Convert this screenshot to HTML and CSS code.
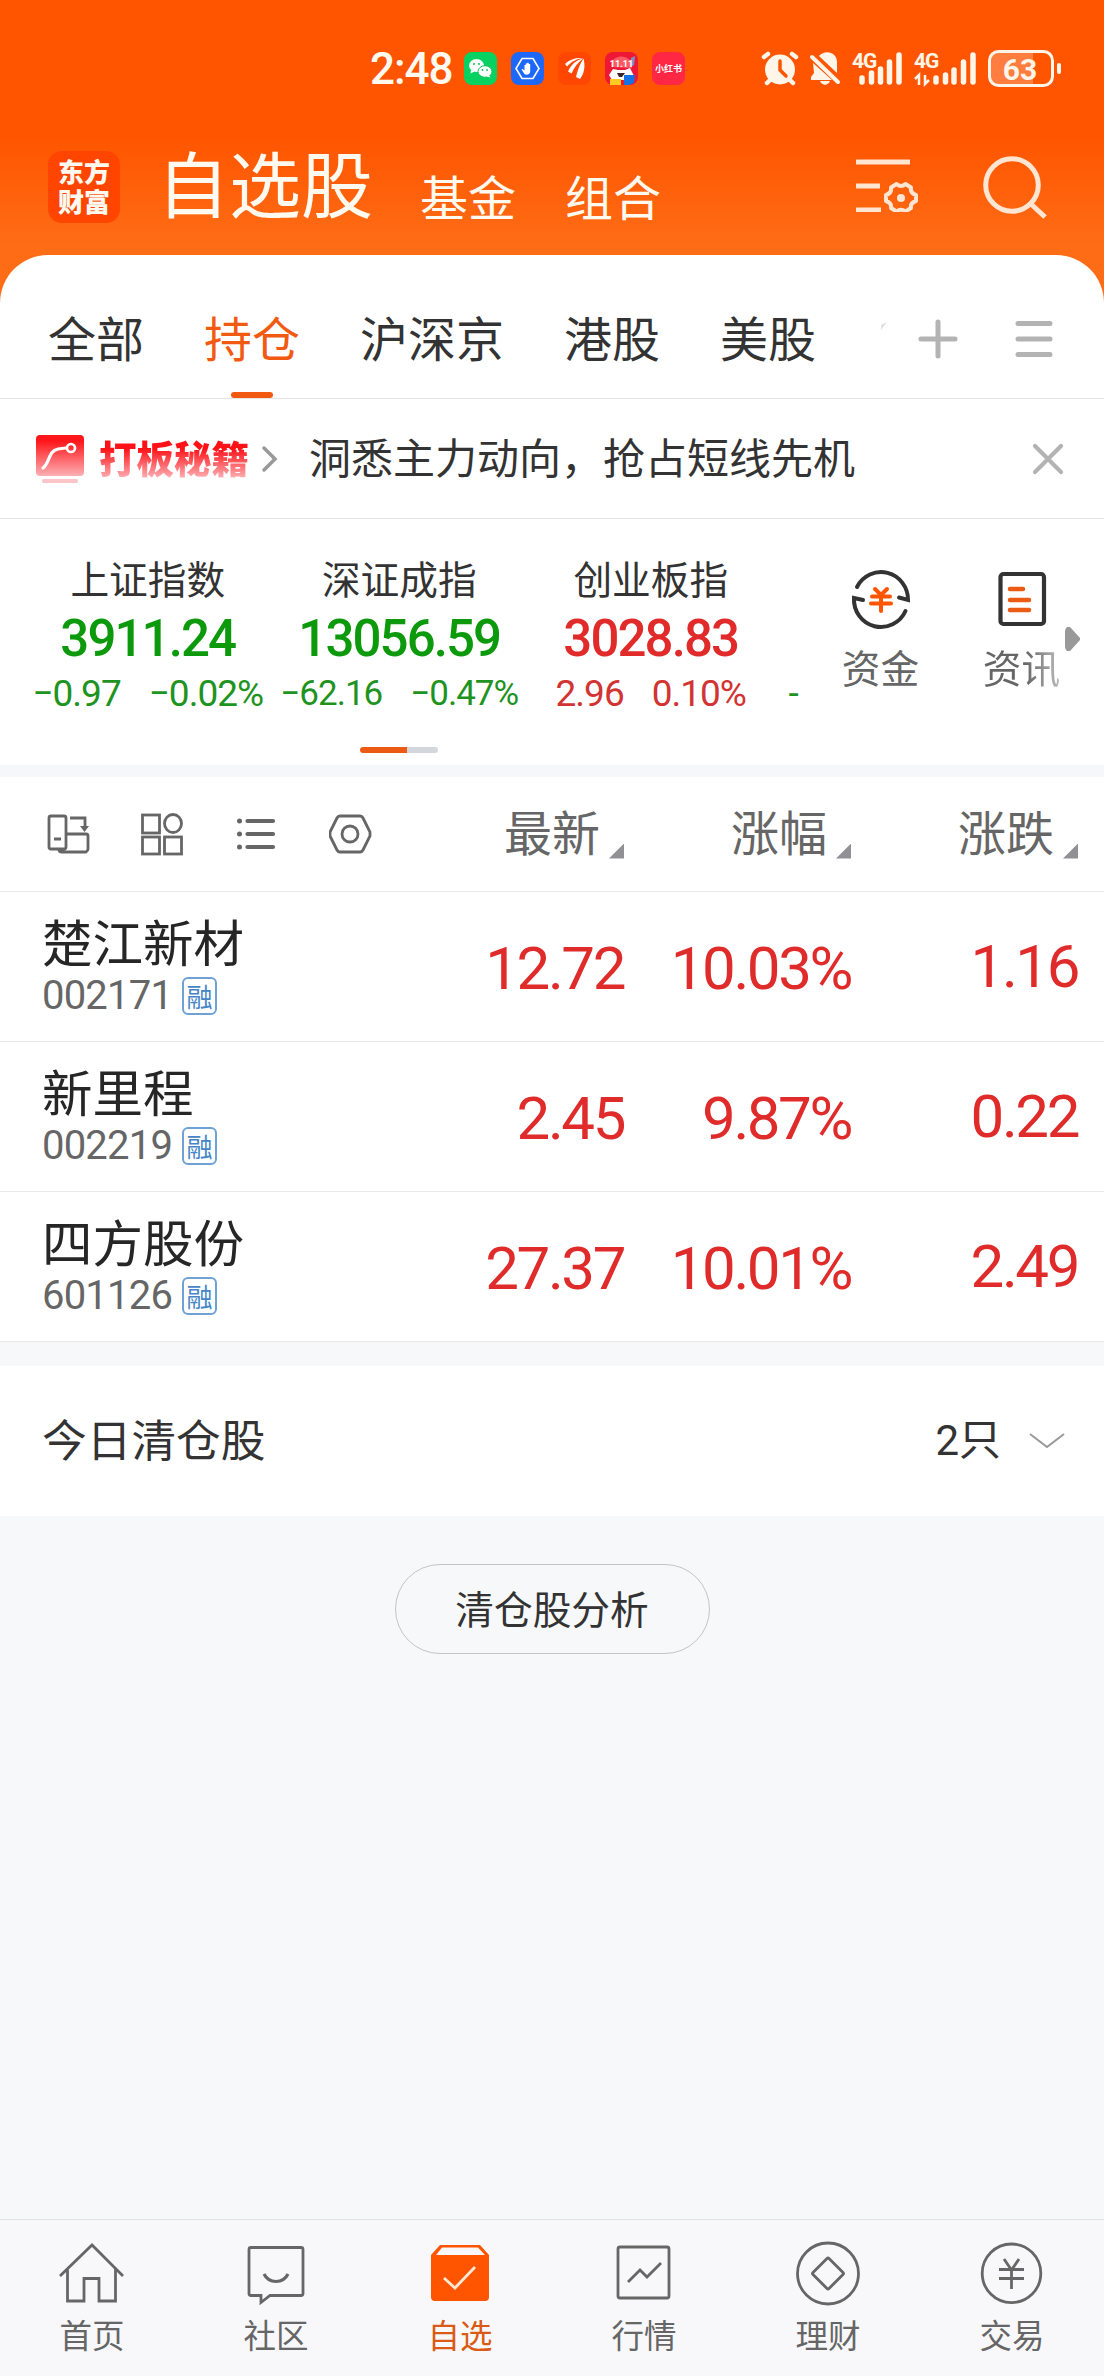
FILE: index.html
```html
<!DOCTYPE html>
<html lang="zh-CN">
<head>
<meta charset="utf-8">
<title>自选股</title>
<link rel="stylesheet" href="styles.css">
</head>
<body>
<div class="app">
  <header class="top">
    <div class="status">
      <span class="clock">2:48</span>
      <div class="apps">
        <svg width="33" height="33" viewBox="0 0 33 33"><rect width="33" height="33" rx="8" fill="#07d160"/><ellipse cx="12.500" cy="13.500" rx="7.500" ry="6.500" fill="#fff"/><path d="M7 18l-.5 3.500 4-2z" fill="#fff"/><ellipse cx="21" cy="19.500" rx="7" ry="5.800" fill="#fff" stroke="#07c95b" stroke-width="1"/><path d="M25 23l1.500 2.500-4-1z" fill="#fff"/><g fill="#07c95b"><circle cx="10" cy="12" r="1"/><circle cx="15" cy="12" r="1"/><circle cx="18.500" cy="18" r=".9"/><circle cx="23" cy="18" r=".9"/></g></svg>
        <svg width="33" height="33" viewBox="0 0 33 33"><rect width="33" height="33" rx="8" fill="#1d68fa"/><path d="M11 6.500h11l6 10-6 10H11l-6-10z" fill="none" stroke="#fff" stroke-width="1.600"/><path d="M13.500 22l-3-4.500 1-.5 2 1.500v-5.500h1.200v-1.500h1.500v-.8h1.500v1.300h1.500v7.500c0 3-3.500 4-5.700 2.500z" fill="#fff"/></svg>
        <svg width="33" height="33" viewBox="0 0 33 33"><rect width="33" height="33" rx="8" fill="#ff4603"/><path d="M7 12c5-5 11-6.500 18-6-7 1-12 4-16 8.500zM10 19.500c3-7 8-11.500 15-13-5 4-9 9-11.500 15zM18 25c2-8 4-13 7.500-18.500 2 7 1 15-3.500 20.500z" fill="#fff"/></svg>
        <svg width="33" height="33" viewBox="0 0 33 33"><rect width="33" height="33" rx="8" fill="#ee1735"/><path d="M6 15C5 1 28 1 27 16z" fill="#ff5a63"/><path d="M26 6l4-2-1 9-3 2z" fill="#7796c5"/><path d="M4 23l4-6 5 1h7l5-2 4 8-4 4H7z" fill="#fff"/><path d="M12 21h8l-3 4h-3z" fill="#392529"/><rect x="5" y="27" width="11" height="6" fill="#ffca22"/><path d="M19 23h11l-1 8-5 2h-5z" fill="#1472e5"/><text x="16.500" y="15" class="mini-number">11.11</text></svg>
        <svg width="33" height="33" viewBox="0 0 33 33"><rect width="33" height="33" rx="8" fill="#ff2744"/><text x="16.500" y="20" class="mini-cn">小红书</text></svg>
      </div>
      <svg class="system" width="306" height="40" viewBox="757 48 306 40">
        <g fill="none" stroke="#fff5e8" stroke-width="4.500" stroke-linecap="round"><path d="M763 56l4-3M795 56l-4-3M769 79l-3 3M789 79l3 3"/></g>
        <circle cx="779" cy="68.500" r="15" fill="#fff5e8"/><path d="M779 60v9l6 6" fill="none" stroke="#ff5500" stroke-width="3.500" stroke-linecap="round"/>
        <path d="M818 55c6-7 18-4 18 6v11l-18-17zM812 62l19 17h-21v-3l3-4zM819 80h10c-2 5-8 5-10 0z" fill="#fff5e8"/><path d="M811 56l26 25" stroke="#fff5e8" stroke-width="4" stroke-linecap="round"/>
        <g stroke="#fff5e8" stroke-width="5.500" stroke-linecap="round"><path d="M861 77v4M870.500 72v9M879.500 68v13M888.500 61v20M898 54v27M935 77v4M944.500 74v7M953 69v12M962.500 61v20M972 54v27"/></g>
        <text x="851" y="67" class="network">4G</text><text x="913" y="67" class="network">4G</text>
        <path d="M914 78l4-4v10M928 79l-4 4V74" fill="none" stroke="#fff5e8" stroke-width="2.500"/>
        <path d="M997 51h35v33h-35q-9 0-9-9V60q0-9 9-9z" fill="#ff7d3e"/><rect x="988.500" y="50.500" width="63" height="34" rx="9" fill="none" stroke="#fff5e8" stroke-width="3"/><path d="M1058 64v7" stroke="#fff5e8" stroke-width="4" stroke-linecap="round"/><text x="1019" y="79" class="battery">63</text>
      </svg>
    </div>
    <div class="brand-row">
      <div class="logo"><span>东方</span><span>财富</span></div>
      <nav class="modes"><b>自选股</b><span>基金</span><span>组合</span></nav>
      <div class="top-actions">
        <svg width="64" height="56" viewBox="855 156 64 56" fill="none" stroke="#ffe5d2" stroke-width="5"><path d="M855 163h54M855 187h24M855 211h25" transform="translate(0 -1)"/><path d="M895.500 185Q900 189 904.500 185L910 188.500Q909 194 915 196V202Q909 204 910 209L904.500 212.500Q900 209 895.500 212.500L890 209Q891 204 885 202V196Q891 194 890 188.500Z" stroke-width="4" stroke-linejoin="round" transform="translate(0 -1)"/><circle cx="900" cy="198" r="4" fill="#ffe5d2" stroke="none"/></svg>
        <svg width="64" height="66" viewBox="982 155 64 66" fill="none" stroke="#ffe5d2" stroke-width="5"><circle cx="1011" cy="184" r="26.300"/><path d="M1030 203l14 13"/></svg>
      </div>
    </div>
  </header>

  <main class="sheet">
    <nav class="tabs">
      <span>全部</span><span class="on">持仓</span><span>沪深京</span><span>港股</span><span>美股</span>
      <svg class="peek" width="8" height="10" viewBox="0 0 8 10"><path d="M0 3L6 0 0 8z" fill="#e1e1e1"/></svg>
      <svg class="plus" width="40" height="40" viewBox="0 0 40 40"><path d="M3 20h34M20 3v34" class="soft"/></svg>
      <svg class="menu" width="40" height="40" viewBox="0 0 40 40"><path d="M4 4.500h32M4 20h32M4 35.500h32" class="soft"/></svg>
    </nav>

    <section class="banner">
      <svg width="50" height="50" viewBox="35 433 50 50"><defs><linearGradient id="fade" x2="0" y2="1"><stop offset=".15" stop-color="#ff171b"/><stop offset="1" stop-color="#fcb0b5"/></linearGradient></defs><rect x="36" y="434" width="48" height="41" rx="4" fill="url(#fade)"/><path d="M43 467c7-5 5-17 15-19l8-1" fill="none" stroke="#fff" stroke-width="3.200" stroke-linecap="round"/><circle cx="71" cy="447" r="4" fill="none" stroke="#fff" stroke-width="2.600"/><path d="M44 480h32" stroke="#fac5c8" stroke-width="4" stroke-linecap="round"/></svg>
      <strong>打板秘籍</strong>
      <svg class="go" width="18" height="30" viewBox="0 0 18 30"><path d="M3 4l11 11L3 26" fill="none" stroke="#999" stroke-width="3.500" stroke-linecap="round"/></svg>
      <p>洞悉主力动向，抢占短线先机</p>
      <svg class="close" width="34" height="34" viewBox="0 0 34 34"><path d="M4 4l26 26M30 4L4 30" fill="none" stroke="#b3b3b3" stroke-width="4.200" stroke-linecap="round"/></svg>
    </section>

    <section class="market">
      <div class="indices">
        <article class="down"><h3>上证指数</h3><strong>3911.24</strong><p><span>−0.97</span><span>−0.02%</span></p></article>
        <article class="down compact"><h3>深证成指</h3><strong>13056.59</strong><p><span>−62.16</span><span>−0.47%</span></p></article>
        <article class="up"><h3>创业板指</h3><strong>3028.83</strong><p><span>2.96</span><span>0.10%</span></p></article>
        <span class="next">-</span>
      </div>
      <div class="tool">
        <svg width="62" height="66" viewBox="849 567 62 66" fill="none" stroke="#333" stroke-width="4" stroke-linecap="round"><path d="M856 588A27 27.500 0 0 1 907 601L898 598.500M904.500 612A27 27.500 0 0 1 853 599L862 601"/><path d="M874 590l6 6 6-6M871 597.500h18M870 604.500h20M880 597v15" stroke="#ff5500"/></svg>
        <span>资金</span>
      </div>
      <div class="tool news">
        <svg width="62" height="66" viewBox="990 567 62 66" fill="none" stroke-linecap="round"><rect x="999.500" y="575" width="43.500" height="50" rx="3" stroke="#333" stroke-width="4.200"/><path d="M1009 590h13M1009 601h19M1009 611h19" stroke="#ec5b13" stroke-width="4.500"/></svg>
        <span>资讯</span>
      </div>
      <svg class="more" width="16" height="26" viewBox="0 0 16 26"><path d="M2 1h3l10 11v2L5 25H2q-2-2-2-4V5q0-2 2-4z" fill="#999"/></svg>
      <i class="pager"></i>
    </section>

    <section class="stocks">
      <div class="grid head">
        <div class="views">
          <svg width="44" height="44" viewBox="47 812 44 44"><path d="M50 816h14q2 0 2 2v29q0 2-2 2H51q-2 0-2-2v-29q0-2 2-2M54 839h7M70 818h15v9M67 834h19q2 0 2 2v13q0 2-2 3H61q-2 0-2-3v-1"/><path d="M80 826h9l-4.500 6z" class="solid"/></svg>
          <svg width="44" height="44" viewBox="141 812 44 44"><rect x="142.500" y="815" width="17" height="18"/><ellipse cx="173" cy="823.500" rx="8.500" ry="9"/><rect x="142.500" y="837" width="17" height="17"/><rect x="164.500" y="837" width="17" height="17"/></svg>
          <svg width="44" height="44" viewBox="235 812 44 44"><path d="M247.500 821H273M247.500 834H273M247.500 847H273" stroke-width="4.200" stroke-linecap="round"/><g class="solid"><circle cx="239.500" cy="821" r="2.500"/><circle cx="239.500" cy="834" r="2.500"/><circle cx="239.500" cy="847" r="2.500"/></g></svg>
          <svg width="44" height="44" viewBox="329 812 44 44"><path d="M340 816h20q2 0 3 2l7 14v4l-7 14q-1 2-3 2h-20q-2 0-3-2l-7-14v-4l7-14q1-2 3-2z"/><circle cx="350" cy="834" r="8"/></svg>
        </div>
        <span class="sort">最新<i></i></span><span class="sort">涨幅<i></i></span><span class="sort">涨跌<i></i></span>
      </div>
      <div class="grid row"><div class="who"><b>楚江新材</b><p>002171<em>融</em></p></div><span>12.72</span><span>10.03%</span><span class="diff">1.16</span></div>
      <div class="grid row"><div class="who"><b>新里程</b><p>002219<em>融</em></p></div><span>2.45</span><span>9.87%</span><span class="diff">0.22</span></div>
      <div class="grid row"><div class="who"><b>四方股份</b><p>601126<em>融</em></p></div><span>27.37</span><span>10.01%</span><span class="diff">2.49</span></div>
    </section>

    <section class="cleared"><h2>今日清仓股</h2><span>2只</span><svg width="38" height="20" viewBox="0 0 38 20"><path d="M2 3l17 13L36 3" fill="none" stroke="#999" stroke-width="2"/></svg></section>
    <button class="analyse">清仓股分析</button>
  </main>

  <nav class="bottom">
    <a><svg width="66" height="68" viewBox="59 2240 66 68"><path d="M60 2276l32-31 31 31M67.500 2269v32H84v-22.500h15v22.500h16.500v-32"/></svg>首页</a>
    <a><svg width="66" height="68" viewBox="243 2240 66 68"><path d="M251 2247.500h50q2 0 2 2v44q0 2-2 2h-31l-9 7v-7h-10q-2 0-2-2v-44q0-2 2-2z"/><path d="M264 2274c5 10 19 10 24 0" stroke-width="3.200"/></svg>社区</a>
    <a class="on"><svg width="66" height="68" viewBox="427 2240 66 68"><path d="M440 2245h40l9 10v42q0 4-4 4h-50q-4 0-4-4v-42z" fill="#ff5500" stroke="none"/><path d="M442 2247.500h36l7 7.500h-49z" fill="#f8f8fa" stroke="none"/><path d="M444 2278l11 10 20-21" stroke="#ffe9d2"/></svg>自选</a>
    <a><svg width="66" height="68" viewBox="611 2240 66 68"><rect x="618" y="2247" width="51" height="51" rx="2"/><path d="M628 2282l12-12 7 7 14-14"/></svg>行情</a>
    <a><svg width="66" height="68" viewBox="795 2240 66 68"><circle cx="828" cy="2273.500" r="30.500"/><path d="M827 2258.500q1-1 2 0l14 14q1 1 0 2l-14 14q-1 1-2 0l-14-14q-1-1 0-2z"/></svg>理财</a>
    <a><svg width="66" height="68" viewBox="979 2240 66 68"><circle cx="1011.500" cy="2273.300" r="29.300"/><path d="M1004 2259l7.500 11 7.500-11M999 2269.500h25M999 2278.500h25M1011.500 2270v19"/></svg>交易</a>
  </nav>
</div>
</body>
</html>
```
FILE: styles.css
```css
* { box-sizing: border-box; }
body, h2, h3, p { margin: 0; font-weight: 400; }
body { background: #f7f8fa; color: #333; font-family: "Noto Sans CJK SC", sans-serif; }
svg { display: block; flex: none; }
.app { width: 1104px; height: 2376px; display: flex; flex-direction: column; background: linear-gradient(#ff5500 137px, #ff6c16 245px, #ff6c16 320px, #f7f8fa 320px); }

.top { height: 255px; flex: none; color: #fffaf0; }
.status { height: 137px; padding: 0 40px 0 370px; display: flex; align-items: center; }
.clock { width: 94px; font: 500 44px/50px Roboto, sans-serif; letter-spacing: -1px; white-space: nowrap; }
.apps { display: flex; gap: 14px; }
.system { margin-left: auto; }
.mini-number { font: 700 9px Roboto, sans-serif; fill: #fff; text-anchor: middle; }
.mini-cn { font: 700 9px "Noto Sans CJK SC", sans-serif; fill: #fff; text-anchor: middle; }
.network { font: 700 21px Roboto, sans-serif; letter-spacing: -1px; fill: #fff5e8; }
.battery { font: 700 30px Roboto, sans-serif; fill: #fff5e8; text-anchor: middle; }
.brand-row { height: 118px; padding: 14px 57px 0 48px; display: flex; align-items: flex-start; }
.logo { width: 72px; height: 72px; padding-top: 5px; border-radius: 14px; background: #ff4500; font-size: 26px; font-weight: 900; line-height: 30px; text-align: center; flex: none; }
.logo span { display: block; }
.modes { display: flex; align-items: baseline; margin: -20px 0 0 37px; font-size: 48px; line-height: 100px; }
.modes b { font-size: 72px; font-weight: 400; margin-right: 47px; }
.modes span { padding-top: 5px; margin-bottom: -5px; position: relative; top: 4px; }
.modes span + span { margin-left: 49px; }
.top-actions { margin: 5px 0 0 auto; display: flex; gap: 63px; }

.sheet { flex: 1; display: flex; flex-direction: column; }
.tabs { height: 144px; padding-left: 48px; display: flex; align-items: center; gap: 60px; background: #fff; border-radius: 48px 48px 0 0; border-bottom: 1px solid #e5e5e5; font-size: 48px; }
.tabs span { height: 143px; line-height: 162px; white-space: nowrap; }
.tabs .on { color: #f25a12; display: flex; flex-direction: column; align-items: center; }
.tabs .on::after { content: ""; width: 42px; height: 6px; margin-top: -25px; border-radius: 3px; background: #f25a12; }
.soft { fill: none; stroke: #b3b3b3; stroke-width: 5; stroke-linecap: round; }
.peek { margin: 0 -31px 0 5px; }
.plus { margin: 24px 0 0; }
.menu { margin: 24px 0 0 -4px; }

.banner { height: 120px; padding: 0 39px 0 35px; display: flex; align-items: center; background: #fff; border-bottom: 1px solid #e5e5e5; }
.banner strong { margin-left: 14px; margin-top: -3px; font-size: 37.500px; font-weight: 900; line-height: 56px; color: transparent; background: linear-gradient(#ff1217 35%, #ffb0b5 88%); background-clip: text; -webkit-background-clip: text; }
.go { margin-left: 12px; }
.banner p { margin-left: 30px; font-size: 42px; line-height: 56px; margin-top: -6px; white-space: nowrap; }
.close { margin-left: auto; }

.market { height: 246px; position: relative; display: flex; background: #fff; }
.indices { width: 800px; padding-left: 22px; display: flex; overflow: hidden; }
.indices article { width: 251.500px; flex: none; padding-top: 30px; text-align: center; }
.indices h3 { font-size: 38.700px; line-height: 56px; }
.indices strong { display: block; margin-top: 2px; font: 500 51px/64px Roboto, sans-serif; letter-spacing: -1.900px; }
.indices p { display: flex; justify-content: center; gap: 28px; font: 400 37px/46px Roboto, sans-serif; letter-spacing: -1px; white-space: nowrap; }
.indices .compact p { font-size: 35px; }
.down strong { color: #0c9a0c; }
.down p, .next { color: #1f931f; }
.up strong { color: #e12b2b; }
.up p { color: #d23333; }
.next { margin: 152px 0 0 12px; font: 37px/46px Roboto, sans-serif; }
.tool { width: 141px; padding-top: 47px; display: flex; flex-direction: column; align-items: center; font-size: 38.700px; line-height: 56px; color: #666; margin-left: 10px; }
.tool span { margin-top: 6px; }
.tool.news { margin-left: 0; }
.news span { color: transparent; background: linear-gradient(90deg, #666 55%, #bbb); background-clip: text; -webkit-background-clip: text; }
.more { margin: 107px 0 0 -27px; }
.pager { position: absolute; left: 360px; top: 228px; width: 78px; height: 6px; border-radius: 3px; background: linear-gradient(90deg, #ec5b13 47px, #d3d6da 47px); }

.stocks { border-top: 12px solid #f5f7fa; background: #fff; }
.grid { display: grid; grid-template-columns: 396px 228px 227px 227px; height: 150px; border-bottom: 1px solid #eaeaea; align-items: center; }
.head { height: 115px; }
.views { display: flex; gap: 50px; padding-left: 47px; }
.views svg { fill: none; stroke: #666; stroke-width: 2.800; }
.views .solid { fill: #666; stroke: none; }
.sort { display: flex; justify-content: flex-end; font-size: 48px; line-height: 70px; color: #666; margin-top: -9px; }
.sort i { width: 15px; height: 15px; margin: 49px 0 0 9px; background: #909095; clip-path: polygon(100% 0, 100% 100%, 0 100%); }
.row > span { text-align: right; color: #e02b2b; font: 400 60px/70px Roboto, sans-serif; letter-spacing: -2.400px; margin-top: 5px; }
.row > .diff { margin-top: 0; }
.who { padding-left: 42px; align-self: start; }
.who b { display: block; font-size: 50.500px; font-weight: 400; line-height: 60px; color: #262626; margin-top: 18px; }
.who p { display: flex; align-items: center; margin-top: 6px; height: 40px; font: 40px/40px Roboto, sans-serif; letter-spacing: -.800px; color: #666; }
.who em { width: 35px; height: 38px; margin-left: 10px; border: 2px solid #6fa1d5; border-radius: 6px; font: 400 26px/33px "Noto Sans CJK SC", sans-serif; text-align: center; letter-spacing: 0; color: #4686c6; }

.cleared { height: 174px; border-top: 24px solid #f7f8fa; background: #fff; padding: 0 38px 0 42px; display: flex; align-items: center; }
.cleared h2 { font-size: 44.700px; line-height: 60px; margin-top: -6px; }
.cleared span { margin-left: auto; margin-right: 27px; font-size: 42px; line-height: 60px; font-family: Roboto, "Noto Sans CJK SC", sans-serif; }
.analyse { align-self: center; width: 315px; height: 90px; margin-top: 48px; padding: 0 0 5px; border: 1px solid #c3c4c6; border-radius: 45px; background: transparent; color: #333; font: 38.700px/56px "Noto Sans CJK SC", sans-serif; }

.bottom { height: 157px; flex: none; padding-top: 20px; display: grid; grid-template-columns: repeat(6, 1fr); background: #f8f8fa; border-top: 1px solid #e0e2e4; }
.bottom a { display: flex; flex-direction: column; align-items: center; font-size: 32.500px; line-height: 52px; color: #666; }
.bottom svg { fill: none; stroke: #666; stroke-width: 2.800; }
.bottom .on { color: #d95b17; }
```
